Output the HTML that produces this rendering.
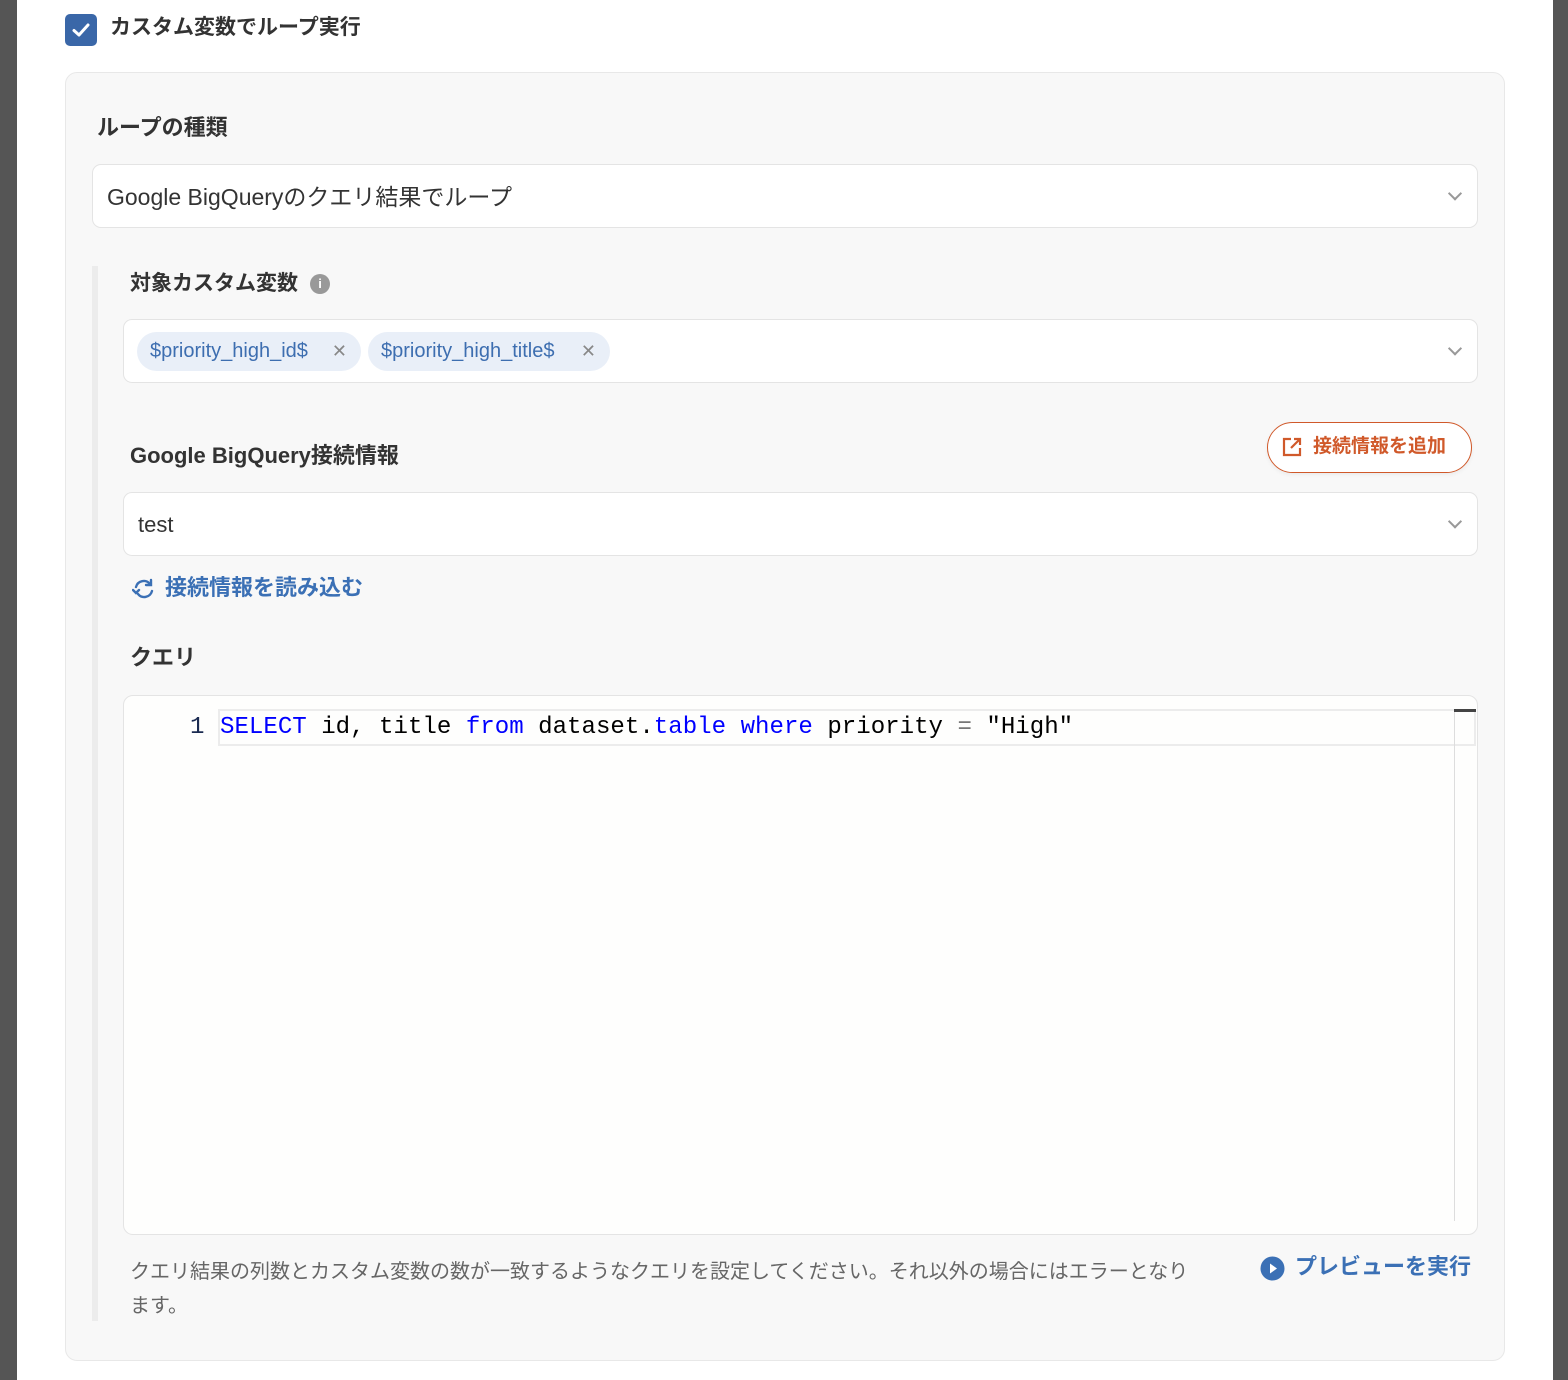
<!DOCTYPE html>
<html><head><meta charset="utf-8">
<style>
*{box-sizing:border-box;margin:0;padding:0}
body{width:1568px;height:1380px;overflow:hidden;background:#555;font-family:"Liberation Sans","Noto Sans CJK JP",sans-serif;position:relative}
.modal{position:absolute;left:17px;top:0;width:1536px;height:1380px;background:#fff}
.abs{position:absolute}
.lbl{position:absolute;font-size:22px;font-weight:bold;color:#333;line-height:1}
.sel{position:absolute;background:#fff;border:1px solid #e4e4e4;border-radius:9px}
.chev{position:absolute;right:17px;top:50%;width:10px;height:10px;border-right:2.5px solid #999;border-bottom:2.5px solid #999;transform:translateY(-75%) rotate(45deg)}
.chip{position:absolute;top:12px;height:39px;background:#e9eff8;border-radius:20px;color:#3d6eb0;font-size:20px;line-height:39px;padding-left:13px}
.chip .x{position:absolute;right:14px;top:0;color:#888;font-size:18px}
</style></head><body>
<div class="modal"></div>
<div class="abs" style="left:65px;top:14px;width:32px;height:32px;background:#3a67a8;border-radius:5px">
<svg width="32" height="32" viewBox="0 0 32 32"><path d="M9 16.5l5 4.5 9-10" stroke="#fff" stroke-width="3" fill="none" stroke-linecap="round" stroke-linejoin="round"/></svg></div>
<div class="lbl" style="left:110px;top:17px;font-size:21px">カスタム変数でループ実行</div>

<div class="abs" style="left:65px;top:72px;width:1440px;height:1289px;background:#f8f8f8;border:1px solid #e8e8e8;border-radius:12px"></div>
<div class="lbl" style="left:97px;top:117px">ループの種類</div>
<div class="sel" style="left:92px;top:164px;width:1386px;height:64px"><div class="abs" style="left:14px;top:13px;font-size:23px;color:#333">Google BigQueryのクエリ結果でループ</div><div class="chev"></div></div>

<div class="abs" style="left:92px;top:266px;width:6px;height:1055px;background:#ececec"></div>

<div class="lbl" style="left:130px;top:273px;font-size:21px">対象カスタム変数</div>
<div class="abs" style="left:310px;top:274px;width:20px;height:20px;border-radius:50%;background:#999;color:#fff;font-size:13px;font-weight:bold;text-align:center;line-height:20px">i</div>
<div class="sel" style="left:123px;top:319px;width:1355px;height:64px">
<div class="chip" style="left:13px;width:224px">$priority_high_id$<span class="x">✕</span></div>
<div class="chip" style="left:244px;width:242px">$priority_high_title$<span class="x">✕</span></div>
<div class="chev"></div></div>

<div class="lbl" style="left:130px;top:445px">Google BigQuery接続情報</div>
<div class="abs" style="left:1267px;top:422px;width:205px;height:51px;border:1.5px solid #d0592a;border-radius:26px;background:#fff;box-shadow:0 2px 4px rgba(0,0,0,.05)">
<svg class="abs" style="left:14px;top:14px" width="20" height="20" viewBox="0 0 20 20"><path d="M9 2H2v16h16v-7" stroke="#d0592a" stroke-width="2.2" fill="none"/><path d="M12 2h6v6M18 2L9 11" stroke="#d0592a" stroke-width="2.2" fill="none"/></svg>
<div class="abs" style="left:45px;top:14px;font-size:19px;font-weight:bold;color:#d0592a;line-height:1">接続情報を追加</div></div>
<div class="sel" style="left:123px;top:492px;width:1355px;height:64px"><div class="abs" style="left:14px;top:19px;font-size:22px;color:#333">test</div><div class="chev"></div></div>

<svg class="abs" style="left:132px;top:578px" width="24" height="22" viewBox="0 0 24 22"><path d="M4 9a8 8 0 0 1 14-3" stroke="#3b70b5" stroke-width="2.4" fill="none" stroke-linecap="round"/><path d="M19 2v5h-5" stroke="#3b70b5" stroke-width="2.4" fill="none" stroke-linecap="round"/><path d="M20 13a8 8 0 0 1-14 3" stroke="#3b70b5" stroke-width="2.4" fill="none" stroke-linecap="round"/><path d="M1 12l3 3 3-3" stroke="#3b70b5" stroke-width="2.4" fill="none" stroke-linecap="round"/></svg>
<div class="abs" style="left:165px;top:577px;font-size:22px;font-weight:bold;color:#3b70b5;line-height:1">接続情報を読み込む</div>

<div class="lbl" style="left:130px;top:647px">クエリ</div>
<div class="sel" style="left:123px;top:695px;width:1355px;height:540px;border-radius:10px;background:#fefefd">
<div class="abs" style="left:94px;top:13px;width:1258px;height:37px;border:2px solid #ececec"></div>
<div class="abs" style="left:1330px;top:13px;width:1px;height:512px;background:#ddd"></div>
<div class="abs" style="left:1330px;top:13px;width:22px;height:3px;background:#444"></div>
<div class="abs" style="left:66px;top:17px;font-family:'Liberation Mono','DejaVu Sans Mono',monospace;font-size:24.1px;line-height:30px;color:#1a2a50">1</div>
<div class="abs" style="left:96px;top:17px;font-family:'Liberation Mono','DejaVu Sans Mono',monospace;font-size:24.1px;line-height:30px;color:#000;white-space:pre"><span style="color:#00f">SELECT</span> id, title <span style="color:#00f">from</span> dataset.<span style="color:#00f">table</span> <span style="color:#00f">where</span> priority <span style="color:#777">=</span> "High"</div>
</div>

<div class="abs" style="left:130px;top:1255px;width:1070px;font-size:20px;line-height:34px;color:#666">クエリ結果の列数とカスタム変数の数が一致するようなクエリを設定してください。それ以外の場合にはエラーとなります。</div>
<svg class="abs" style="left:1260px;top:1256px" width="25" height="25" viewBox="0 0 25 25"><circle cx="12.5" cy="12.5" r="12" fill="#3b70b5"/><path d="M10 7.5l7 5-7 5z" fill="#fff"/></svg>
<div class="abs" style="left:1295px;top:1256px;font-size:22px;font-weight:bold;color:#3b70b5;line-height:1">プレビューを実行</div>
</body></html>
